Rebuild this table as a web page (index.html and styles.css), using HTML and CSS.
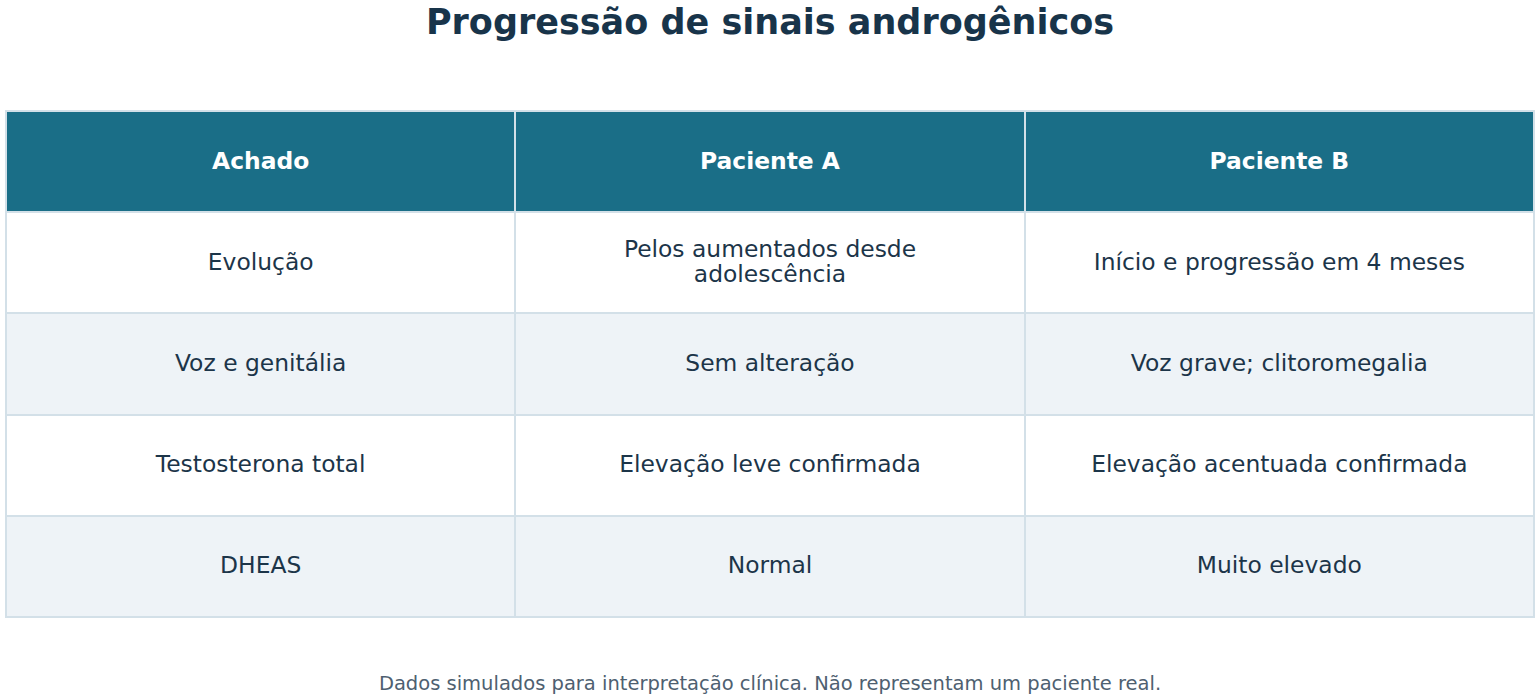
FILE: index.html
```html
<!DOCTYPE html>
<html lang="pt">
<head>
<meta charset="utf-8">
<title>Progressão de sinais androgênicos</title>
<link rel="stylesheet" href="styles.css">
</head>
<body>
<div class="page">
  <h1 class="title">Progressão de sinais androgênicos</h1>
  <table class="grid">
    <thead>
      <tr><th>Achado</th><th>Paciente A</th><th>Paciente B</th></tr>
    </thead>
    <tbody>
      <tr><td>Evolução</td><td>Pelos aumentados desde<br>adolescência</td><td>Início e progressão em 4 meses</td></tr>
      <tr class="alt"><td>Voz e genitália</td><td>Sem alteração</td><td>Voz grave; clitoromegalia</td></tr>
      <tr><td>Testosterona total</td><td>Elevação leve confirmada</td><td>Elevação acentuada confirmada</td></tr>
      <tr class="alt"><td>DHEAS</td><td>Normal</td><td>Muito elevado</td></tr>
    </tbody>
  </table>
  <p class="note">Dados simulados para interpretação clínica. Não representam um paciente real.</p>
</div>
</body>
</html>
```
FILE: styles.css
```css
html, body {
  margin: 0;
  padding: 0;
  background: #ffffff;
}
body {
  font-family: "DejaVu Sans", sans-serif;
  color: #1c3549;
}
.page {
  width: 1540px;
  height: 700px;
  overflow: hidden;
  display: flex;
  flex-direction: column;
  align-items: center;
}
.title {
  margin: 2px 0 0 0;
  height: 108px;
  font-size: 35px;
  line-height: 40px;
  font-weight: bold;
  color: #18344a;
  text-align: center;
}
.grid {
  width: 1530px;
  border-collapse: collapse;
  table-layout: fixed;
  border: 2px solid #d3e0e8;
}
.grid th, .grid td {
  border: 2px solid #d3e0e8;
  text-align: center;
  vertical-align: middle;
  height: 98.2px;
  padding: 0 8px 1px 8px;
  font-size: 23.4px;
  line-height: 25px;
}
.grid th {
  background: #1a6e87;
  color: #ffffff;
  font-weight: bold;
}
.grid td {
  background: #ffffff;
  color: #1c3549;
}
.grid tr.alt td {
  background: #eef3f7;
}
.note {
  margin: 55px 0 0 0;
  font-size: 19.5px;
  line-height: 22px;
  color: #4e6070;
  text-align: center;
}
```
